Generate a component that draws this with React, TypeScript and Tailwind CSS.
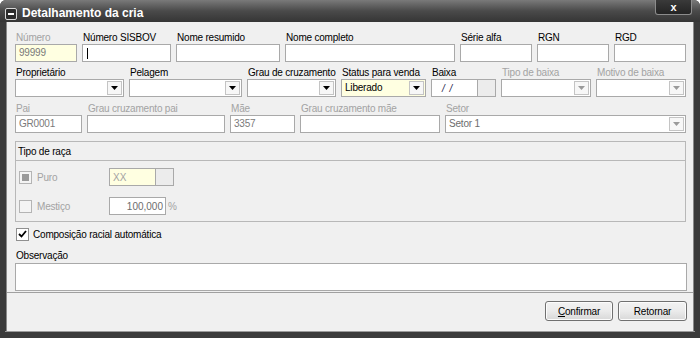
import React from 'react';

const fieldBox = 'h-[18px] border border-[#a9a9a9] flex items-center text-[10px] tracking-[-0.2px] leading-[12px]';

function Label({ text, disabled }: { text: string; disabled?: boolean }) {
  return (
    <div
      className={`h-[12px] pl-[1px] text-[10px] leading-[12px] tracking-[-0.2px] whitespace-nowrap ${
        disabled ? 'text-[#a3a3a3]' : 'text-black'
      }`}
    >
      {text}
    </div>
  );
}

function Arrow({ disabled }: { disabled?: boolean }) {
  return (
    <svg width="7" height="4" viewBox="0 0 7 4">
      <path d="M0 0h7L3.5 4z" fill={disabled ? '#9a9a9a' : '#000'} />
    </svg>
  );
}

function TextBox({
  w,
  label,
  value,
  yellow,
  disabled,
  cursor,
}: {
  w: string;
  label: string;
  value?: string;
  yellow?: boolean;
  disabled?: boolean;
  cursor?: boolean;
}) {
  return (
    <div className={`flex flex-col ${w}`}>
      <Label text={label} disabled={disabled} />
      <div
        className={`${fieldBox} pl-[3px] ${yellow ? 'bg-[#ffffe1]' : 'bg-white'} ${
          disabled ? 'text-[#7a7a7a]' : 'text-black'
        }`}
      >
        {cursor && <div className="w-[1px] h-[11px] bg-black ml-[1px]" />}
        {value}
      </div>
    </div>
  );
}

function Combo({
  w,
  label,
  value,
  yellow,
  disabled,
}: {
  w: string;
  label: string;
  value?: string;
  yellow?: boolean;
  disabled?: boolean;
}) {
  return (
    <div className={`flex flex-col ${w}`}>
      <Label text={label} disabled={disabled} />
      <div className={`${fieldBox} ${yellow ? 'bg-[#ffffe1]' : 'bg-white'}`}>
        <div className={`flex-1 pl-[3px] ${disabled ? 'text-[#6d6d6d]' : 'text-black'}`}>{value}</div>
        <div className="w-[15px] h-[14px] mr-[1px] border border-[#c4c4c4] bg-[#f7f7f7] flex items-center justify-center">
          <Arrow disabled={disabled} />
        </div>
      </div>
    </div>
  );
}

function WinButton({ children, w }: { children: React.ReactNode; w: string }) {
  return (
    <div
      className={`${w} h-[20px] rounded-[3px] border border-[#707070] bg-linear-to-b from-[#f2f2f2] via-[#ebebeb] to-[#d8d8d8] shadow-[inset_0_0_0_1px_#fcfcfc] flex items-center justify-center text-[10px] tracking-[-0.2px] text-black`}
    >
      {children}
    </div>
  );
}

export default function App() {
  return (
    <div className="w-[700px] h-[338px] bg-white font-['Liberation_Sans',Arial,sans-serif] overflow-hidden">
      <div className="w-full h-full flex flex-col bg-[#3b3b3b] rounded-t-[6px] overflow-hidden">
        {/* Title bar */}
        <div className="h-[22px] flex items-start bg-linear-to-b from-[#7a7a7a] via-[#4a4a4a] to-[#353535] relative">
          <div className="ml-[5px] mt-[8px] w-[12px] h-[12px] rounded-[2px] border border-[#d8d8d8] bg-[#2c2c2c] flex items-center justify-center">
            <div className="w-[6px] h-[2px] bg-white" />
          </div>
          <div className="ml-[5px] mt-[5px] text-[12px] leading-[16px] font-bold text-white">Detalhamento da cria</div>
          <div className="absolute left-[655px] top-0 w-[37px] h-[15px] rounded-b-[3px] border border-t-0 border-[#8c8c8c] bg-linear-to-b from-[#3a3a3a] to-[#242424] flex items-center justify-center text-white text-[11px] font-bold leading-[11px]">
            x
          </div>
        </div>

        {/* Client area */}
        <div className="mx-[6px] h-[309px] bg-[#f0f0f0] border-l border-r border-[#8a8a8a] flex flex-col">
          <div className="pl-[8px] pt-[10px] flex flex-col">
            {/* Row 1 */}
            <div className="flex gap-[5px]">
              <TextBox w="w-[62px]" label="Número" value="99999" yellow disabled />
              <TextBox w="w-[89px]" label="Número SISBOV" cursor />
              <TextBox w="w-[104px]" label="Nome resumido" />
              <TextBox w="w-[170px]" label="Nome completo" />
              <TextBox w="w-[72px]" label="Série alfa" />
              <TextBox w="w-[72px]" label="RGN" />
              <TextBox w="w-[72px]" label="RGD" />
            </div>

            {/* Row 2 */}
            <div className="flex gap-[5px] mt-[5px]">
              <Combo w="w-[109px]" label="Proprietário" />
              <Combo w="w-[113px]" label="Pelagem" />
              <Combo w="w-[89px]" label="Grau de cruzamento" />
              <Combo w="w-[85px]" label="Status para venda" value="Liberado" yellow />
              <div className="flex flex-col w-[65px]">
                <Label text="Baixa" />
                <div className="flex h-[18px]">
                  <div className="w-[47px] h-full border border-[#a9a9a9] bg-white flex items-center pl-[10px] text-[10px] text-[#1a1a4a] italic tracking-[1px]">
                    / /
                  </div>
                  <div className="w-[18px] h-full border border-l-0 border-[#a9a9a9] bg-[#ececec]" />
                </div>
              </div>
              <Combo w="w-[90px]" label="Tipo de baixa" disabled />
              <Combo w="w-[90px]" label="Motivo de baixa" disabled />
            </div>

            {/* Row 3 */}
            <div className="flex gap-[5px] mt-[6px]">
              <TextBox w="w-[67px]" label="Pai" value="GR0001" disabled />
              <TextBox w="w-[138px]" label="Grau cruzamento pai" disabled />
              <TextBox w="w-[65px]" label="Mãe" value="3357" disabled />
              <TextBox w="w-[140px]" label="Grau cruzamento mãe" disabled />
              <Combo w="w-[241px]" label="Setor" value="Setor 1" disabled />
            </div>

            {/* Tipo de raça group */}
            <div className="mt-[8px] w-[671px] h-[81px] border border-[#b8b8b8] flex flex-col">
              <div className="h-[19px] border-b border-[#b8b8b8] pl-[2px] flex items-center text-[10px] tracking-[-0.2px] text-black">
                Tipo de raça
              </div>
              <div className="flex items-center mt-[7px] pl-[3px]">
                <div className="w-[90px] flex items-center">
                  <div className="w-[13px] h-[13px] border border-[#b4b4b4] bg-[#f4f4f4] flex items-center justify-center">
                    <div className="w-[7px] h-[7px] bg-[#9a9a9a]" />
                  </div>
                  <span className="ml-[5px] text-[10px] tracking-[-0.2px] text-[#a3a3a3]">Puro</span>
                </div>
                <div className="w-[47px] h-[18px] border border-[#a9a9a9] bg-[#ffffe1] pl-[3px] flex items-center text-[10px] text-[#a3a3a3]">
                  XX
                </div>
                <div className="w-[18px] h-[18px] border border-l-0 border-[#a9a9a9] bg-[#ececec]" />
              </div>
              <div className="flex items-center mt-[11px] pl-[3px]">
                <div className="w-[90px] flex items-center">
                  <div className="w-[13px] h-[13px] border border-[#b4b4b4] bg-[#f4f4f4]" />
                  <span className="ml-[5px] text-[10px] tracking-[-0.2px] text-[#a3a3a3]">Mestiço</span>
                </div>
                <div className="w-[57px] h-[18px] border border-[#a9a9a9] bg-white pr-[2px] flex items-center justify-end text-[10px] text-[#6d6d6d]">
                  100,000
                </div>
                <span className="ml-[2px] text-[10px] text-[#a3a3a3]">%</span>
              </div>
            </div>

            {/* Composição */}
            <div className="mt-[5px] h-[14px] flex items-center">
              <div className="ml-[1px] w-[13px] h-[13px] border border-[#8f8f8f] bg-white flex items-center justify-center">
                <svg width="9" height="8" viewBox="0 0 9 8">
                  <path d="M1 4l2.5 2.5L8 1" stroke="#000" strokeWidth="1.8" fill="none" />
                </svg>
              </div>
              <span className="ml-[4px] text-[10px] tracking-[-0.2px] text-black">Composição racial automática</span>
            </div>

            {/* Observação */}
            <div className="mt-[9px]">
              <Label text="Observação" />
            </div>
            <div className="mt-[1px] w-[672px] h-[28px] border border-[#a9a9a9] bg-white" />
          </div>

          {/* Button panel */}
          <div className="mt-[1px] flex-1 border-t border-[#a0a0a0] flex justify-end items-start pt-[8px] pr-[6px] gap-[5px]">
            <WinButton w="w-[68px]">
              <span className="underline">C</span>onfirmar
            </WinButton>
            <WinButton w="w-[69px]">Retornar</WinButton>
          </div>
        </div>

        {/* Bottom frame */}
        <div className="flex-1 bg-[#3b3b3b] border-t border-[#9a9a9a] mx-[5px]" />
      </div>
    </div>
  );
}
